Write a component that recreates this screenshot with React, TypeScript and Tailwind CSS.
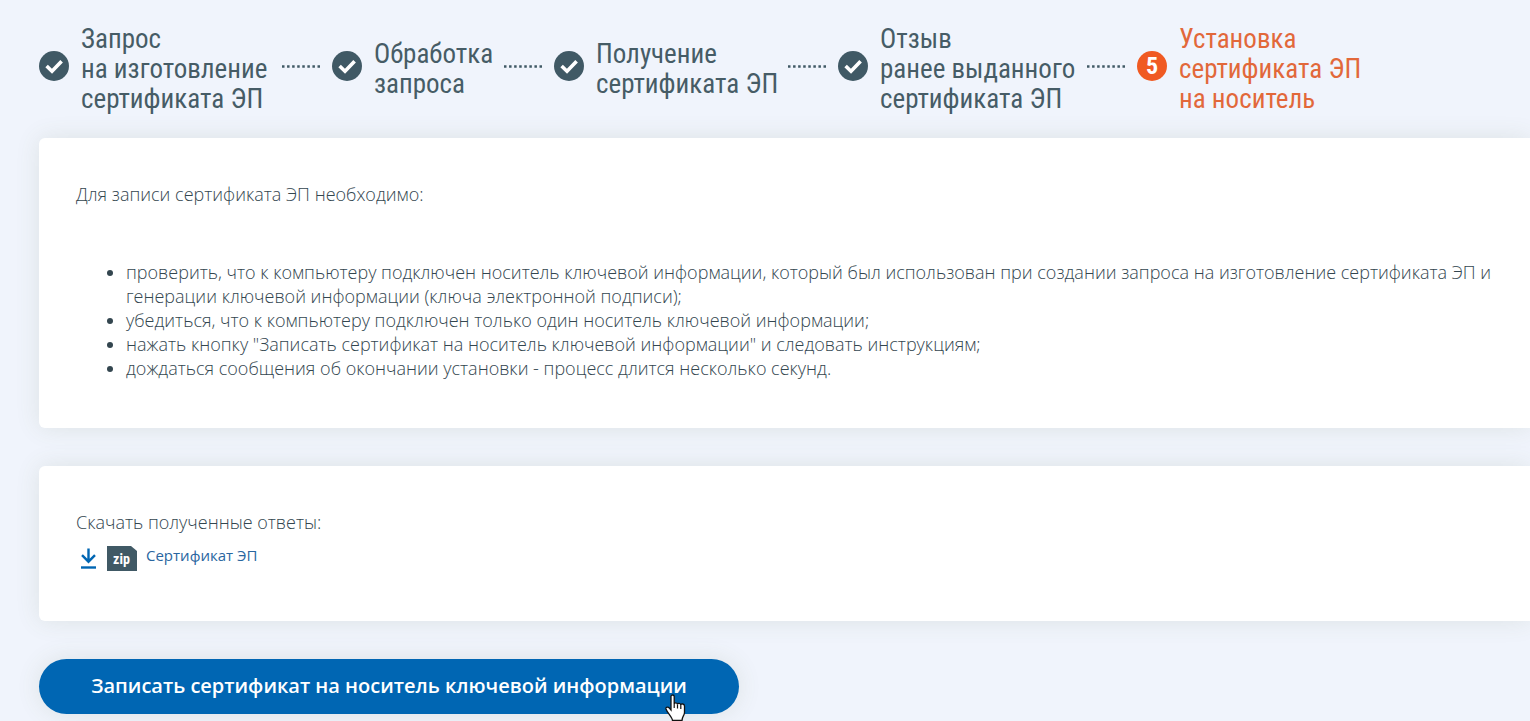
import { Fragment } from "react";
import type { ReactNode } from "react";

const steps = [
  { lines: ["Запрос", "на изготовление", "сертификата ЭП"], width: "w-[187px]", done: true },
  { lines: ["Обработка", "запроса"], width: "w-[116px]", done: true },
  { lines: ["Получение", "сертификата ЭП"], width: "w-[178px]", done: true },
  { lines: ["Отзыв", "ранее выданного", "сертификата ЭП"], width: "w-[193px]", done: true },
  { lines: ["Установка", "сертификата ЭП", "на носитель"], width: "w-[178px]", done: false },
];

const instructions = [
  "проверить, что к компьютеру подключен носитель ключевой информации, который был использован при создании запроса на изготовление сертификата ЭП и генерации ключевой информации (ключа электронной подписи);",
  "убедиться, что к компьютеру подключен только один носитель ключевой информации;",
  "нажать кнопку \"Записать сертификат на носитель ключевой информации\" и следовать инструкциям;",
  "дождаться сообщения об окончании установки - процесс длится несколько секунд.",
];

function CheckIcon() {
  return (
    <svg viewBox="0 0 30 30" className="w-[30px] h-[30px] shrink-0" aria-hidden="true">
      <circle cx="15" cy="15" r="15" fill="#405965" />
      <path d="M7.6 15l5.4 5.200 9.600-10" fill="none" stroke="#fff" strokeWidth="3.6" />
    </svg>
  );
}

function Dots() {
  return (
    <svg viewBox="0 0 38 3" className="w-[38px] h-[3px] ml-3.5 mr-3 shrink-0" aria-hidden="true">
      <path d="M0 1.5h38" stroke="#405965" strokeWidth="2.5" strokeDasharray="2.5 2.57" />
    </svg>
  );
}

function Steps() {
  return (
    <ol className="flex items-center h-[90px] font-['Roboto_Condensed','Liberation_Sans_Narrow',sans-serif] font-normal text-[27px] leading-[30px]">
      {steps.map((step, i) => (
        <Fragment key={step.lines.join(" ")}>
          {i > 0 && (
            <li role="presentation" className="pb-1.5">
              <Dots />
            </li>
          )}
          <li className={`flex items-center gap-3 ${step.done ? "text-[#465c66]" : "text-[#e2683a]"}`}>
            <span className="pb-1.5">
              {step.done ? (
                <CheckIcon />
              ) : (
                <span className="flex items-center justify-center w-[30px] h-[30px] rounded-full bg-[#f05a22] text-white text-2xl font-bold">
                  {i + 1}
                </span>
              )}
            </span>
            <span className={`${step.width} whitespace-nowrap`}>
              {step.lines.map((line) => (
                <span key={line} className="block">{line}</span>
              ))}
            </span>
          </li>
        </Fragment>
      ))}
    </ol>
  );
}

function Card({ children }: { children: ReactNode }) {
  return (
    <section className="bg-white rounded-l-md shadow-[0_0_24px_rgba(90,105,60,0.12)] pl-[37px] pr-4 pt-11 pb-12">
      {children}
    </section>
  );
}

export default function App() {
  return (
    <main className="min-h-screen overflow-hidden bg-[#f0f4fc] pl-[39px] pt-6 font-['Open_Sans','Noto_Sans',sans-serif] font-light text-lg leading-6 text-[#33464f]">
      <Steps />

      <div className="mt-6 flex flex-col gap-[38px]">
        <Card>
          <p>Для записи сертификата ЭП необходимо:</p>
          <ul className="mt-[54px] pl-[50px] list-disc">
            {instructions.map((text) => (
              <li key={text}>{text}</li>
            ))}
          </ul>
        </Card>

        <Card>
          <p>Скачать полученные ответы:</p>
          <a href="#certificate" className="mt-[9px] flex w-fit items-start font-normal text-[15px] text-[#2a669f]">
            {/* Download arrow */}
            <svg viewBox="0 0 24 30" className="w-6 h-[30px]" fill="none" stroke="#0066b3" aria-hidden="true">
              <path d="M12.5 5.5v13M6 12.2l6.5 6.5 6.5-6.5" strokeWidth="2.4" />
              <path d="M5 24.5h15" strokeWidth="2.4" />
            </svg>
            {/* File type */}
            <svg viewBox="0 0 30 25" className="w-[30px] h-[25px] mt-[3px] ml-[7px]" aria-hidden="true">
              <path d="M0 0h24l6 5v20H0z" fill="#405965" />
              <text x="14.5" y="17.5" textAnchor="middle" fill="#fff" fontSize="14" fontWeight="700" fontFamily="Roboto Condensed, Liberation Sans Narrow, sans-serif">
                zip
              </text>
            </svg>
            <span className="ml-[9px]">Сертификат ЭП</span>
          </a>
        </Card>
      </div>

      <div className="relative mt-[38px] w-[700px]">
        <button type="button" className="w-full h-[55px] pb-0.5 rounded-full bg-[#0066b3] text-white text-xl font-semibold cursor-pointer shadow-[0_0_24px_rgba(90,105,60,0.12)]">
          Записать сертификат на носитель ключевой информации
        </button>
        {/* Hand pointer */}
        <svg viewBox="0 0 22 28" className="absolute left-[626px] top-[35px] w-[22px] h-7 pointer-events-none" aria-hidden="true">
          <path
            d="M6 2.5c0-2 3.2-2 3.2 0v7.5c0-1.7 3.3-1.5 3.3.4 0-1.6 3.3-1.4 3.3.5 0-1.5 3.7-1.2 3.7 1v6.6c0 3-2.5 4-2.5 8H7.500c0-3-5.5-8-6.500-11.5-.5-2 2-2.5 3.3-1L6 16z"
            fill="#fff"
            stroke="#111"
            strokeWidth="1.3"
          />
          <path d="M9.2 10v4M12.5 10.5v4M15.8 11v4" stroke="#111" strokeWidth="1.2" />
        </svg>
      </div>
    </main>
  );
}
